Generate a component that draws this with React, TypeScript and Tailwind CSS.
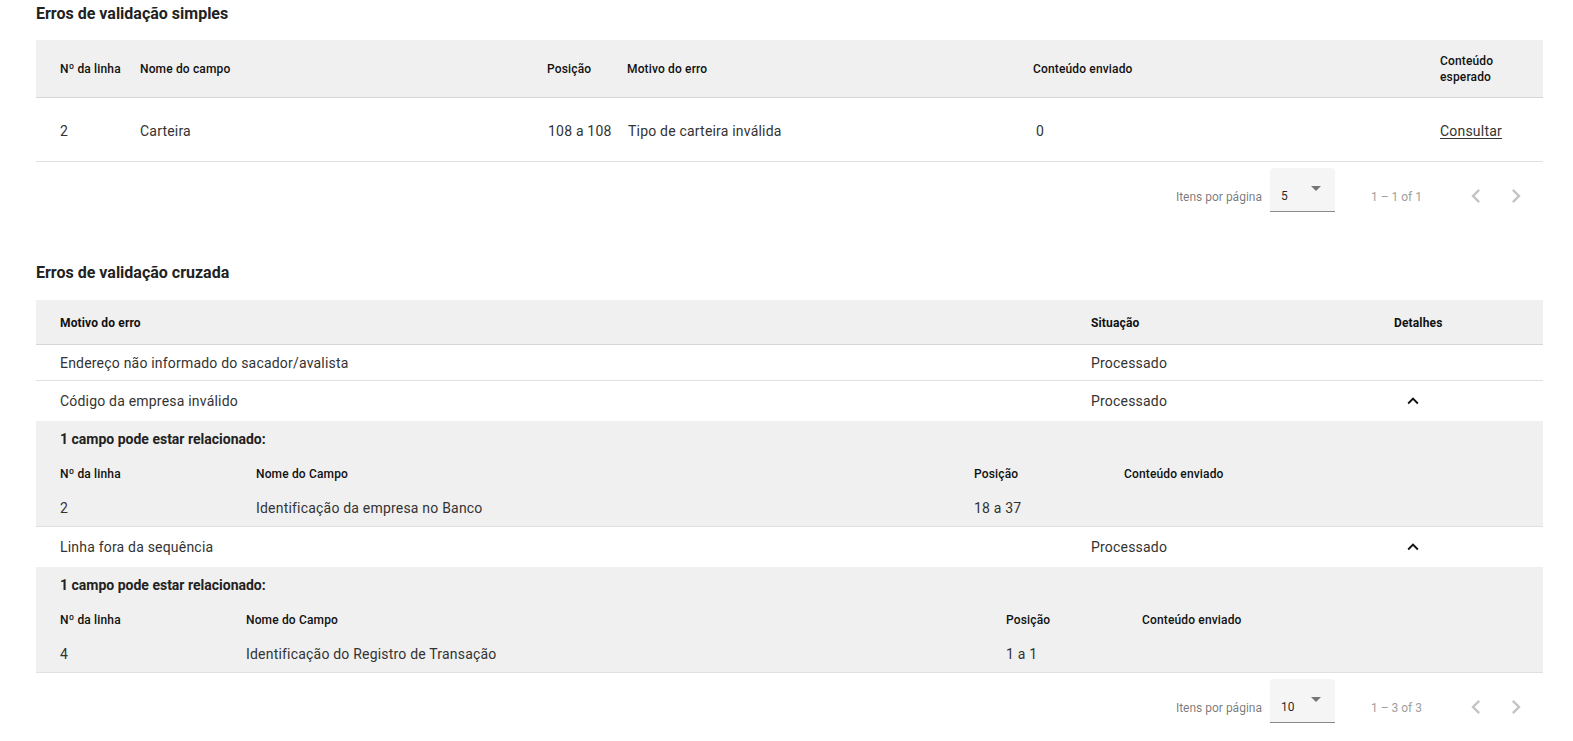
import React from 'react'

const FONT = { fontFamily: 'Roboto, "Noto Sans", sans-serif' }

type Detail = {
  cols: string
  line: string
  field: string
  position: string
}

type CrossError = {
  reason: string
  status: string
  detail?: Detail
}

const CROSS_ERRORS: CrossError[] = [
  { reason: 'Endereço não informado do sacador/avalista', status: 'Processado' },
  {
    reason: 'Código da empresa inválido',
    status: 'Processado',
    detail: {
      cols: 'grid-cols-[196px_718px_150px_1fr]',
      line: '2',
      field: 'Identificação da empresa no Banco',
      position: '18 a 37',
    },
  },
  {
    reason: 'Linha fora da sequência',
    status: 'Processado',
    detail: {
      cols: 'grid-cols-[186px_760px_136px_1fr]',
      line: '4',
      field: 'Identificação do Registro de Transação',
      position: '1 a 1',
    },
  },
]

function ChevronUp() {
  return (
    <svg
      width="22"
      height="22"
      viewBox="0 0 24 24"
      fill="#111"
    >
      <path d="M12 8l-6 6 1.41 1.41L12 10.83l4.59 4.58L18 14z" />
    </svg>
  )
}

function Paginator({ pageSize, range }: { pageSize: string; range: string }) {
  return (
    <div className="flex h-[56px] items-center justify-end pr-[7px] text-[12px] text-[rgba(0,0,0,0.54)]">
      <span className="mt-[13px]">Itens por página</span>
      <div className="relative ml-[8px] h-[44px] w-[65px] rounded-t-[4px] border-b border-[#8a8a8a] bg-[#f5f5f5]">
        <span className="absolute left-[11px] top-[20px] text-[12px] leading-[16px] text-[rgba(0,0,0,0.87)]">{pageSize}</span>
        <span className="absolute left-[41px] top-[18px] h-0 w-0 border-x-[5px] border-t-[5px] border-x-transparent border-t-[#757575]" />
      </div>
      <span className="ml-[36px] mr-[34px] mt-[13px] text-[#9e9e9e]">{range}</span>
      <div className="mt-[12px] flex h-[40px] w-[40px] items-center justify-center">
        <svg
          width="28"
          height="28"
          viewBox="0 0 24 24"
          fill="#c4c4c4"
        >
          <path d="M15.41 7.41L14 6l-6 6 6 6 1.41-1.41L10.83 12z" />
        </svg>
      </div>
      <div className="mt-[12px] flex h-[40px] w-[40px] items-center justify-center">
        <svg
          width="28"
          height="28"
          viewBox="0 0 24 24"
          fill="#c4c4c4"
        >
          <path d="M10 6L8.59 7.41 13.17 12l-4.58 4.59L10 18l6-6z" />
        </svg>
      </div>
    </div>
  )
}

function SimpleErrors() {
  return (
    <section>
      <h2 className="pt-[4px] text-[16px] leading-[20px] font-bold text-[#222]">Erros de validação simples</h2>
      <div className="mt-[16px]">
        <div className="grid h-[58px] grid-cols-[80px_407px_80px_406px_407px_1fr] items-center border-b border-[#d6d6d6] bg-[#f0f0f0] pl-[24px] text-[12px] leading-[16px] font-medium tracking-[0.15px] text-[#111]">
          <span>Nº da linha</span>
          <span>Nome do campo</span>
          <span>Posição</span>
          <span>Motivo do erro</span>
          <span>Conteúdo enviado</span>
          <span>
            Conteúdo
            <br />
            esperado
          </span>
        </div>
        <div className="grid h-[64px] grid-cols-[80px_407px_80px_406px_407px_1fr] items-center border-b border-[#e0e0e0] pt-[3px] pl-[24px] text-[14px] tracking-[0.2px] text-[#333]">
          <span>2</span>
          <span>Carteira</span>
          <span className="pl-[1px]">108 a 108</span>
          <span className="pl-[1px]">Tipo de carteira inválida</span>
          <span className="pl-[3px]">0</span>
          <span className="underline underline-offset-2">Consultar</span>
        </div>
      </div>
      <Paginator
        pageSize="5"
        range="1 – 1 of 1"
      />
    </section>
  )
}

function CrossErrors() {
  return (
    <section className="mt-[45px]">
      <h2 className="text-[16px] leading-[20px] font-bold text-[#222]">Erros de validação cruzada</h2>
      <div className="mt-[17px]">
        <div className="grid h-[45px] grid-cols-[1031px_303px_1fr] items-center border-b border-[#d6d6d6] bg-[#f0f0f0] pt-[1px] pl-[24px] text-[12px] font-bold tracking-[0.15px] text-[#111]">
          <span>Motivo do erro</span>
          <span>Situação</span>
          <span>Detalhes</span>
        </div>
        {CROSS_ERRORS.map((error) => (
          <div key={error.reason}>
            <div
              className={
                error.detail
                  ? 'grid h-[40px] grid-cols-[1031px_303px_1fr] items-center pl-[24px] text-[14px] tracking-[0.2px] text-[#333]'
                  : 'grid h-[36px] grid-cols-[1031px_303px_1fr] items-center border-b border-[#e0e0e0] pt-[1px] pl-[24px] text-[14px] tracking-[0.2px] text-[#333]'
              }
            >
              <span>{error.reason}</span>
              <span>{error.status}</span>
              <span className="pl-[8px]">{error.detail && <ChevronUp />}</span>
            </div>
            {error.detail && (
              <div className="border-b border-[#e0e0e0] bg-[#f0f0f0] pl-[24px]">
                <div className="flex h-[35px] items-center pt-[2px] text-[14px] font-bold text-[#222]">1 campo pode estar relacionado:</div>
                <div className={`grid h-[35px] items-center text-[12px] font-medium tracking-[0.15px] text-[#111] ${error.detail.cols}`}>
                  <span>Nº da linha</span>
                  <span>Nome do Campo</span>
                  <span>Posição</span>
                  <span>Conteúdo enviado</span>
                </div>
                <div className={`grid h-[35px] items-center text-[14px] tracking-[0.2px] text-[#333] ${error.detail.cols}`}>
                  <span>{error.detail.line}</span>
                  <span>{error.detail.field}</span>
                  <span>{error.detail.position}</span>
                  <span />
                </div>
              </div>
            )}
          </div>
        ))}
      </div>
      <Paginator
        pageSize="10"
        range="1 – 3 of 3"
      />
    </section>
  )
}

export default function App() {
  return (
    <div
      className="min-h-screen bg-white pr-[30px] pl-[36px]"
      style={FONT}
    >
      <SimpleErrors />
      <CrossErrors />
    </div>
  )
}
